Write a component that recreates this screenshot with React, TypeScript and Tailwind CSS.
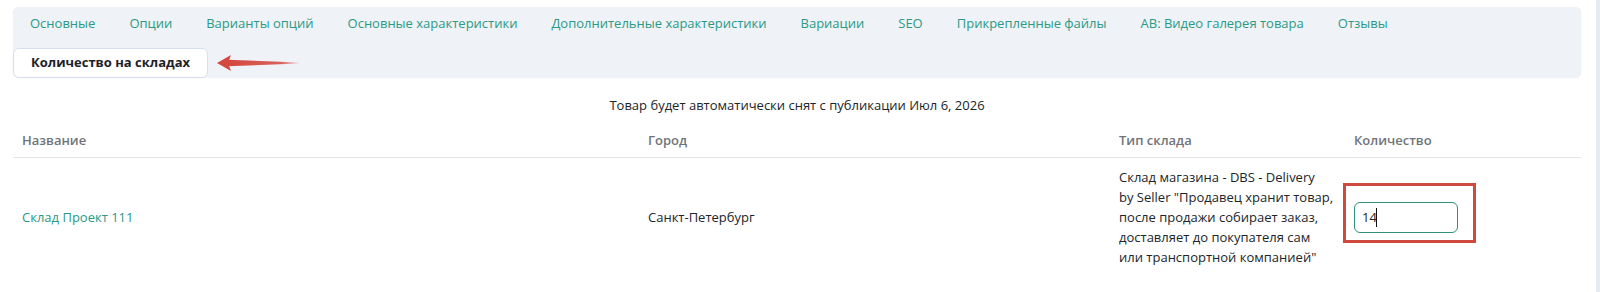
import { useState } from "react";

const tabs = [
  "Основные",
  "Опции",
  "Варианты опций",
  "Основные характеристики",
  "Дополнительные характеристики",
  "Вариации",
  "SEO",
  "Прикрепленные файлы",
  "АВ: Видео галерея товара",
  "Отзывы",
];

function Arrow() {
  return (
    <svg
      aria-hidden="true"
      width="86"
      height="20"
      viewBox="0 0 86 20"
      className="pointer-events-none absolute left-[202px] top-[46px]"
    >
      <defs>
        <linearGradient id="tail" x1="0" y1="0" x2="1" y2="0">
          <stop offset="0" stopColor="#d4483f" />
          <stop offset="0.75" stopColor="#d4483f" stopOpacity="0.85" />
          <stop offset="1" stopColor="#d4483f" stopOpacity="0.1" />
        </linearGradient>
      </defs>
      <polygon points="2,10 16,2 13,10 16,18" fill="#d4483f" />
      <polygon points="12,6.8 84,9.4 84,10.6 12,13.2" fill="url(#tail)" />
    </svg>
  );
}

export default function App() {
  const [qty, setQty] = useState("14");

  return (
    <div className="min-h-[292px] w-full bg-white font-['Open_Sans','Noto_Sans',sans-serif] text-[13px] text-[#212529]">
      <div className="mr-[4px] pl-[13px] pr-[15px] pt-[7px]">
        {/* tab bar */}
        <div className="relative flex flex-col gap-[10px] rounded-md bg-[#eff2f7] pt-[1px] shadow-[0_0_1px_rgba(0,0,0,0.12)]">
          <div className="flex flex-wrap">
            {tabs.map((t) => (
              <a
                key={t}
                href="#"
                className="flex h-[30px] items-center px-[17px] pt-[1px] text-[13px] text-[#2a9a86]"
              >
                {t}
              </a>
            ))}
          </div>
          <div className="flex">
            <button
              type="button"
              className="flex h-[30px] items-center rounded-md border border-[#d6dff0] bg-white px-[17px] text-[13px] font-bold text-[#1d2125]"
            >
              Количество на складах
            </button>
          </div>
          <Arrow />
        </div>

        <p className="mt-[17px] text-center leading-5">
          Товар будет автоматически снят с публикации Июл 6, 2026
        </p>

        {/* table */}
        <div className="mt-[15px]">
          <div className="grid grid-cols-[626px_471px_235px_1fr] border-b border-[#e3e5ec] pb-[7px] font-semibold leading-5 text-[#6f7478]">
            <div className="px-[9px]">Название</div>
            <div className="px-[9px]">Город</div>
            <div className="px-[9px]">Тип склада</div>
            <div className="px-[9px]">Количество</div>
          </div>
          <div className="grid grid-cols-[626px_471px_235px_1fr] items-center pb-[10px] pt-[9px] leading-5">
            <div className="px-[9px]">
              <a href="#" className="text-[#2a9a86]">
                Склад Проект 111
              </a>
            </div>
            <div className="px-[9px]">Санкт-Петербург</div>
            <div className="whitespace-nowrap px-[9px]">
              Склад магазина - DBS - Delivery
              <br />
              by Seller "Продавец хранит товар,
              <br />
              после продажи собирает заказ,
              <br />
              доставляет до покупателя сам
              <br />
              или транспортной компанией"
            </div>
            <div className="px-[9px]">
              <div className="relative w-[104px]">
                <input
                  value={qty}
                  onChange={(e) => setQty(e.target.value)}
                  className="h-[31px] w-[104px] rounded-md border border-[#2f8f78] bg-white px-[7px] text-[13px] text-[#212529] outline-none"
                />
                <span className="absolute left-[22px] top-[6px] h-[19px] w-px bg-[#111]" />
                {/* annotation frame */}
                <div className="pointer-events-none absolute -left-[11px] -right-[18px] -top-[19px] -bottom-[10px] border-[3px] border-[#d0493f]" />
              </div>
            </div>
          </div>
        </div>
      </div>
      <div className="fixed right-0 top-0 h-full w-[4px] bg-[#e6eaf3]" />
    </div>
  );
}
